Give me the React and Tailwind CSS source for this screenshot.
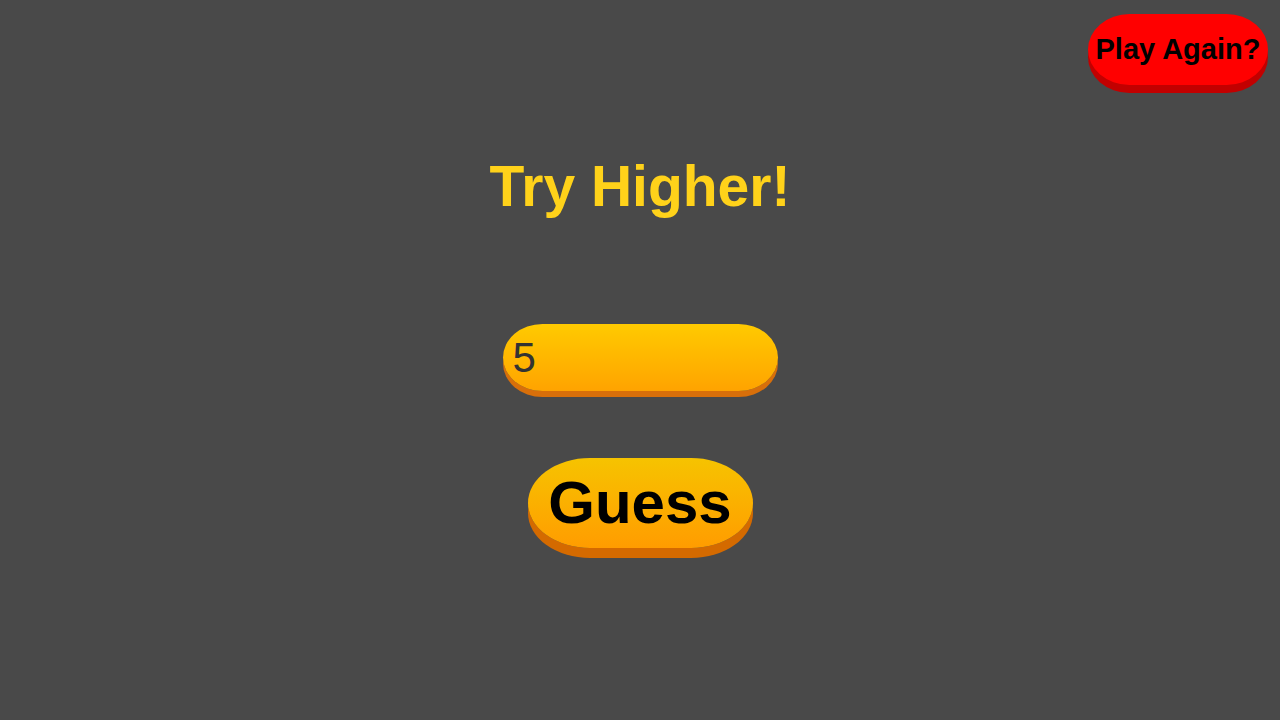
export default function App() {
  return (
    <div
      className="w-[1280px] h-[720px] bg-[#494949] flex flex-col overflow-hidden"
      style={{ fontFamily: '"Liberation Sans", Arial, sans-serif' }}
    >
      {/* Header */}
      <div className="flex justify-end pt-[14px] pr-[12px]">
        <button className="w-[180px] h-[71px] rounded-[42px/36px] bg-[#ff0000] shadow-[0_8px_0_#c20000] text-black text-[29px] font-bold leading-none flex items-center justify-center">
          Play Again?
        </button>
      </div>

      {/* Main column */}
      <div className="flex flex-col items-center">
        <h1 className="mt-[73px] text-[#ffd21a] text-[57px] font-bold leading-none">Try Higher!</h1>

        <div className="mt-[109px] w-[275px] h-[67px] rounded-[40px/34px] bg-gradient-to-b from-[#ffca00] to-[#ffa300] shadow-[0_6px_0_#d86f0a] flex items-center pl-[10px]">
          <span className="text-[42px] leading-none text-[#333333]">5</span>
        </div>

        <button className="mt-[67px] w-[225px] h-[90px] rounded-[62px/45px] bg-gradient-to-b from-[#f6c300] to-[#ff9c00] shadow-[0_10px_0_#d46a00] flex items-center justify-center text-black text-[60px] font-bold leading-none">
          Guess
        </button>
      </div>
    </div>
  );
}
